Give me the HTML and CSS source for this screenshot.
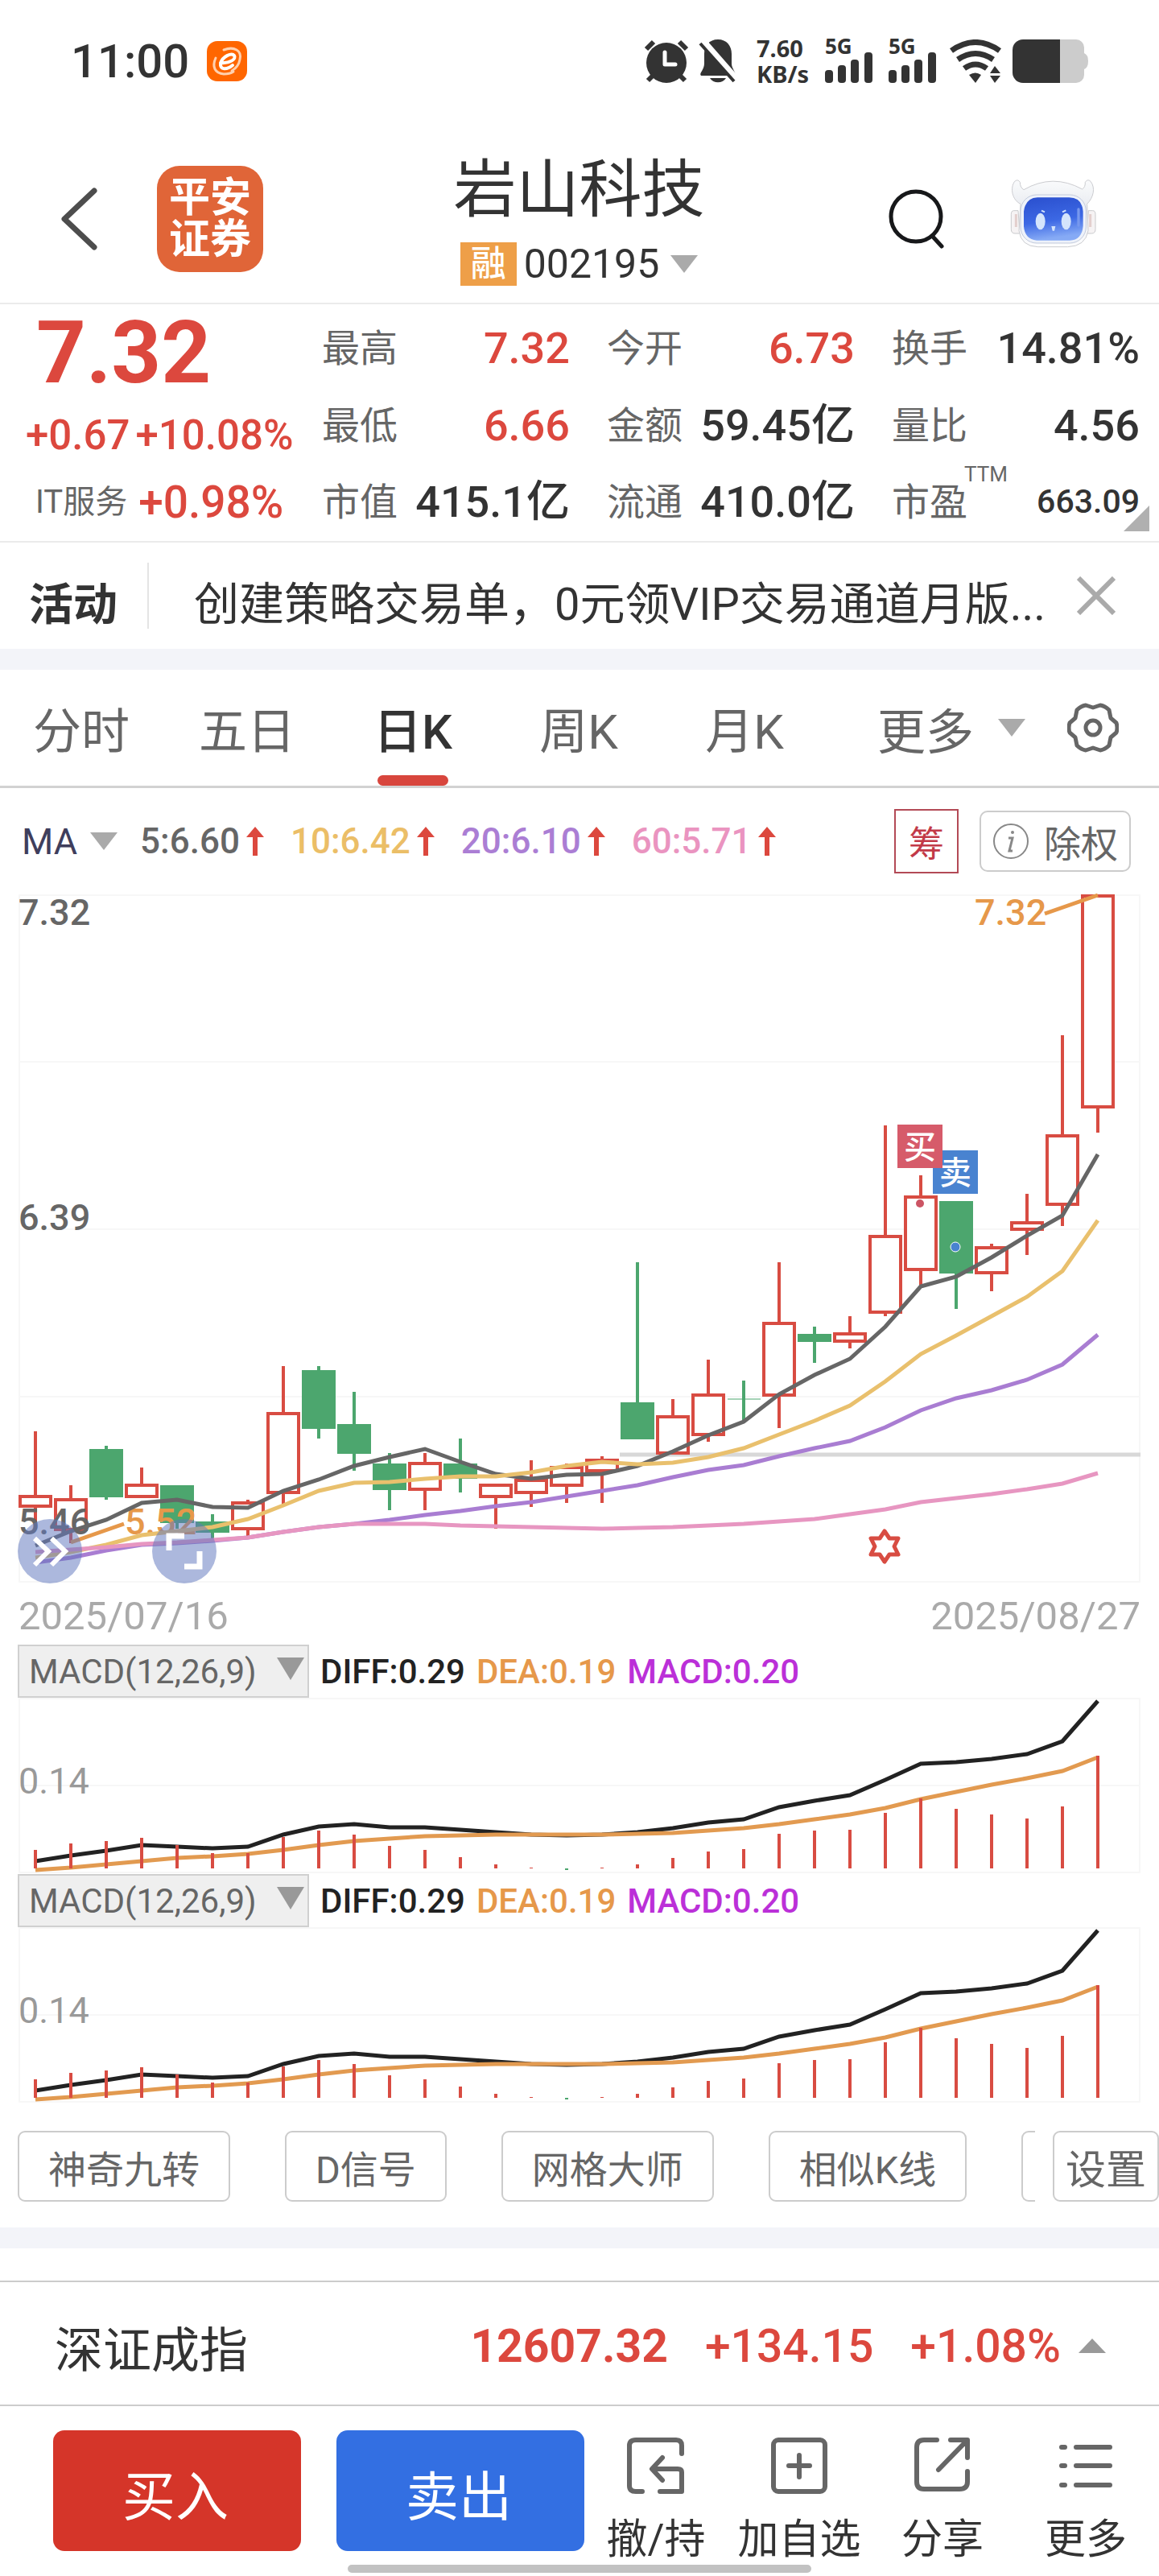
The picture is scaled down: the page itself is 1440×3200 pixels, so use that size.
FILE: index.html
```html
<!DOCTYPE html>
<html lang="zh-CN">
<head>
  <meta charset="UTF-8">
  <meta name="viewport" content="width=device-width, initial-scale=1.0">
  <title>岩山科技 002195</title>
  <link rel="stylesheet" href="styles.css">
</head>
<body>
  <div class="status-bar">
    <span class="clock">11:00</span>
    <svg class="status-app" width="50" height="50" viewBox="0 0 50 50">
      <rect width="50" height="50" rx="13" fill="#ff6600"/>
      <g fill="none" stroke-linecap="round">
        <path d="M17 27c12 1 20-5 17-9-3-4-15 1-17 10-1 8 8 8 15 2" stroke="#fff" stroke-width="4"/>
        <path d="M21 11c13-5 23 1 20 12-1 6-5 11-10 14" stroke="#ffd0ae" stroke-width="3"/>
        <path d="M11 21C6 32 10 40 21 41c5 0 9-1 12-3" stroke="#ffd0ae" stroke-width="3"/>
      </g>
    </svg>
    <div class="status-icons">
      <svg width="56" height="54" viewBox="0 0 56 54" fill="#333">
        <circle cx="28" cy="29" r="25"/>
        <path d="M3 12L12 3M53 12L44 3" stroke="#333" stroke-width="6"/>
        <path d="M5 51l8-8M51 51l-8-8" stroke="#333" stroke-width="6"/>
        <path d="M26 16v15h13" fill="none" stroke="#fff" stroke-width="5" stroke-linejoin="round" stroke-linecap="round"/>
      </svg>
      <svg class="bell" width="48" height="54" viewBox="0 0 48 54" fill="#333">
        <path d="M24 0C35 0 41 8 41 18v12c0 6 5 10 5 15H3c-3-3 4-7 4-15V18C7 8 13 0 24 0z"/>
        <path d="M14 48h20c-4 7-16 7-20 0z"/>
        <path d="M5 2l42 48" stroke="#fff" stroke-width="9"/>
        <path d="M2 5l42 47" stroke="#333" stroke-width="4"/>
      </svg>
      <div class="net-speed"><span>7.60</span><span>KB/s</span></div>
      <div class="signal">
        <span>5G</span>
        <svg width="60" height="38" viewBox="0 0 60 38" fill="#333">
          <rect y="22" width="10" height="16" rx="4"/><rect x="16" y="16" width="10" height="22" rx="4"/>
          <rect x="32" y="9" width="10" height="29" rx="4"/><rect x="49" width="10" height="38" rx="4"/>
        </svg>
      </div>
      <div class="signal">
        <span>5G</span>
        <svg width="60" height="38" viewBox="0 0 60 38" fill="#333">
          <rect y="22" width="10" height="16" rx="4"/><rect x="16" y="16" width="10" height="22" rx="4"/>
          <rect x="32" y="9" width="10" height="29" rx="4"/><rect x="49" width="10" height="38" rx="4"/>
        </svg>
      </div>
      <svg class="wifi" width="66" height="54" viewBox="0 0 66 54" fill="none" stroke="#333" stroke-width="7">
        <path d="M2 14Q32-7 62 14M10 25Q32 10 54 25M18 36Q32 26 46 36"/>
        <path d="M32 54l-8-10q8-5 15 0zM56 33l7 9H50zM56 54l7-9H50z" fill="#333" stroke="none"/>
      </svg>
      <svg width="94" height="54" viewBox="0 0 94 54">
        <path d="M59 0h20a10 10 0 0 1 10 10v7q5 2 5 10t-5 10v7a10 10 0 0 1-10 10H59z" fill="#ccc"/>
        <path d="M13 0h46v54H13A13 13 0 0 1 0 41V13A13 13 0 0 1 13 0z" fill="#333"/>
      </svg>
    </div>
  </div>

  <header class="header">
    <div class="header-left">
      <button class="icon-button" aria-label="返回">
        <svg width="48" height="78" viewBox="0 0 48 78" fill="none" stroke="#4d4d4d" stroke-width="7" stroke-linecap="round" stroke-linejoin="round">
          <path d="M42 4L5 39l37 35"/>
        </svg>
      </button>
      <div class="brand">平安<br>证券</div>
    </div>
    <div class="header-title">
      <h1>岩山科技</h1>
      <button class="code"><span class="badge">融</span>002195<i class="caret"></i></button>
    </div>
    <div class="header-right">
      <button class="icon-button" aria-label="搜索">
        <svg width="70" height="74" viewBox="0 0 70 74" fill="none" stroke="#17181a" stroke-width="5" stroke-linecap="round">
          <circle cx="34" cy="34" r="31"/><path d="M55 59l11 12"/>
        </svg>
      </button>
      <button class="icon-button robot" aria-label="智能助手">
        <svg width="110" height="90" viewBox="520 60 330 270">
          <defs>
            <linearGradient id="face" x1="0" y1="0" x2="0.2" y2="1">
              <stop offset="0" stop-color="#2a4fce"/><stop offset="0.6" stop-color="#3c68e4"/><stop offset="1" stop-color="#86aaf5"/>
            </linearGradient>
            <linearGradient id="shell" x1="0" y1="0" x2="0" y2="1">
              <stop offset="0" stop-color="#fafbfc"/><stop offset="0.4" stop-color="#e9ecf1"/><stop offset="1" stop-color="#fdfdfe"/>
            </linearGradient>
          </defs>
          <path d="M553 185h-16q-10 0-10 14v55q0 16 14 16h18zM815 185h16q10 0 10 14v55q0 16-14 16h-18z" fill="#f6f3f4" stroke="#c9cacd" stroke-width="3"/>
          <path d="M545 198v48M822 198v48" stroke="#e3cfcd" stroke-width="9"/>
          <path d="M562 160C530 145 522 100 540 76q12-10 20 3 0 20 14 28 108-62 218-2 12-8 11-26 9-14 20-3c19 24 11 60-13 84l4 100q-10 58-76 60H626q-62-2-70-60z" fill="url(#shell)" stroke="#cbccd0" stroke-width="3"/>
          <rect x="562" y="126" width="244" height="180" rx="60" fill="#eef2fa" stroke="#c3cbdc" stroke-width="3"/>
          <path d="M625 136h118q48 0 52 52v54q-4 52-50 54H622q-44-4-48-52v-56q6-50 51-52z" fill="url(#face)"/>
          <path d="M778 180v60" stroke="#7798ee" stroke-width="10" stroke-linecap="round"/>
          <ellipse cx="636" cy="225" rx="18" ry="31" fill="#d4e5fc"/><ellipse cx="732" cy="225" rx="18" ry="31" fill="#d4e5fc"/>
          <path d="M640 185l12 5M718 190l13-6" stroke="#d4e5fc" stroke-width="6"/>
          <path d="M677 243h15l-4 17h-7z" fill="#d4e5fc"/>
        </svg>
      </button>
    </div>
  </header>

  <section class="quote">
    <div class="quote-main">
      <div class="price">7.32</div>
      <div class="change"><span>+0.67</span><span>+10.08%</span></div>
      <div class="sector">IT服务<b>+0.98%</b></div>
    </div>
    <div class="quote-grid">
      <div class="cell">最高<b class="up">7.32</b></div>
      <div class="cell">今开<b class="up">6.73</b></div>
      <div class="cell">换手<b>14.81%</b></div>
      <div class="cell">最低<b class="up">6.66</b></div>
      <div class="cell">金额<b>59.45亿</b></div>
      <div class="cell">量比<b>4.56</b></div>
      <div class="cell">市值<b>415.1亿</b></div>
      <div class="cell">流通<b>410.0亿</b></div>
      <div class="cell">市盈<small>TTM</small><b class="pe">663.09</b></div>
    </div>
  </section>

  <section class="notice">
    <strong>活动</strong>
    <a href="#">创建策略交易单，0元领VIP交易通道月版...</a>
    <button class="icon-button" aria-label="关闭">
      <svg width="48" height="48" viewBox="0 0 48 48" stroke="#aaa" stroke-width="6"><path d="M2 2l44 44M46 2L2 46"/></svg>
    </button>
  </section>

  <nav class="tabs">
    <button>分时</button>
    <button>五日</button>
    <button class="active">日K</button>
    <button>周K</button>
    <button>月K</button>
    <div class="tabs-more">
      <button>更多<i class="caret"></i></button>
      <button aria-label="图表设置">
        <svg width="64" height="64" viewBox="0 0 64 64" fill="none" stroke="#666" stroke-width="5" stroke-linejoin="round">
          <path d="M61 26Q63 32 61 38L54 44 52 54Q47 59 41 60L32 57 23 60Q17 59 12 54L10 44 3 38Q1 32 3 26L10 20 12 10Q17 5 23 4L32 7 41 4Q47 5 52 10L54 20z"/>
          <circle cx="32" cy="32" r="9"/>
        </svg>
      </button>
    </div>
  </nav>

  <div class="ma-row">
    <button class="ma-select">MA<i class="caret"></i></button>
    <span class="ma ma5">5:6.60<svg class="arrow" width="22" height="36" viewBox="0 0 22 36"><path d="M11 0l11 13h-8v23H8V13H0z"/></svg></span>
    <span class="ma ma10">10:6.42<svg class="arrow" width="22" height="36" viewBox="0 0 22 36"><path d="M11 0l11 13h-8v23H8V13H0z"/></svg></span>
    <span class="ma ma20">20:6.10<svg class="arrow" width="22" height="36" viewBox="0 0 22 36"><path d="M11 0l11 13h-8v23H8V13H0z"/></svg></span>
    <span class="ma ma60">60:5.71<svg class="arrow" width="22" height="36" viewBox="0 0 22 36"><path d="M11 0l11 13h-8v23H8V13H0z"/></svg></span>
    <button class="chou">筹</button>
    <button class="chuquan">
      <svg width="46" height="46" viewBox="0 0 46 46" fill="none" stroke="#888">
        <circle cx="23" cy="23" r="21" stroke-width="2"/>
        <path d="M20 19h5l-4 16h4" stroke-width="3"/><circle cx="25" cy="12" r="2" fill="#888" stroke="none"/>
      </svg>除权
    </button>
  </div>

  <div class="kline">
    <svg id="kline" viewBox="23 1111 1394 854"></svg>
    <div class="kline-tools">
      <button aria-label="快进">
        <svg width="80" height="80" viewBox="0 0 80 80" fill="none" stroke="#fff" stroke-width="6"><path d="M21 24l17 16-17 17M42 24l17 16-17 17"/></svg>
      </button>
      <button aria-label="全屏">
        <svg width="80" height="80" viewBox="0 0 80 80" fill="none" stroke="#fff" stroke-width="7"><path d="M21 39V21h19M59 40v19H40"/></svg>
      </button>
    </div>
  </div>
  <div class="dates"><span>2025/07/16</span><span>2025/08/27</span></div>

  <section class="indicator">
    <div class="indicator-head">
      <button>MACD(12,26,9)<i class="caret"></i></button>
      <span class="diff">DIFF:0.29</span><span class="dea">DEA:0.19</span><span class="macd">MACD:0.20</span>
    </div>
    <svg class="macd-chart" viewBox="23 0 1394 218"></svg>
  </section>
  <section class="indicator">
    <div class="indicator-head">
      <button>MACD(12,26,9)<i class="caret"></i></button>
      <span class="diff">DIFF:0.29</span><span class="dea">DEA:0.19</span><span class="macd">MACD:0.20</span>
    </div>
    <svg class="macd-chart" viewBox="23 0 1394 218"></svg>
  </section>

  <div class="tools">
    <div class="tools-list">
      <button>神奇九转</button>
      <button>D信号</button>
      <button>网格大师</button>
      <button>相似K线</button>
      <button aria-label="其他"></button>
    </div>
    <button class="tools-setting">设置</button>
  </div>

  <div class="index-row">
    <span class="index-name">深证成指</span>
    <b>12607.32</b>
    <span>+134.15</span>
    <span>+1.08%</span>
    <i class="caret caret-up"></i>
  </div>

  <footer class="actions">
    <div class="trade">
      <button class="buy">买入</button>
      <button class="sell">卖出</button>
    </div>
    <div class="links">
      <a href="#">
        <svg width="72" height="70" viewBox="0 0 72 70"><path d="M68 20V10q0-7-7-7H11q-8 0-8 7v50q0 7 8 7h8M41 67h27V43q0-4-5-4H33M44 25L31 39l13 14"/></svg>
        撤/持
      </a>
      <a href="#">
        <svg width="72" height="70" viewBox="0 0 72 70"><rect x="4" y="3" width="64" height="64" rx="6"/><path d="M36 22v27M23 35h26"/></svg>
        加自选
      </a>
      <a href="#">
        <svg width="72" height="70" viewBox="0 0 72 70"><path d="M29 3H13Q4 3 4 12v43q0 9 9 9h44q10 0 10-9V42M46 3h21v22M66 4L31 40"/></svg>
        分享
      </a>
      <a href="#">
        <svg width="72" height="70" viewBox="0 0 72 70"><path d="M6 12h4M24 12h42M6 35h4M24 35h42M6 59h4M24 59h42"/></svg>
        更多
      </a>
    </div>
    <div class="home-bar"></div>
  </footer>

  <script src="chart.js"></script>
</body>
</html>
```

FILE: styles.css
```css
* {
  box-sizing: border-box;
}

body {
  margin: 0;
  background-color: #fff;
  color: #333;
  font-family: Roboto, "Noto Sans CJK SC", sans-serif;
}

button {
  margin: 0;
  padding: 0;
  border: none;
  background: none;
  color: inherit;
  font: inherit;
  white-space: nowrap;
}

a {
  color: inherit;
  text-decoration: none;
}

svg {
  display: block;
}

/* 下拉小三角 */
.caret {
  display: inline-block;
  flex: none;
  border-left: 17px solid transparent;
  border-right: 17px solid transparent;
  border-top: 22px solid #aaa;
}

.caret-up {
  border-top: none;
  border-bottom: 18px solid #999;
}

/* 状态栏 */
.status-bar {
  display: flex;
  align-items: center;
  height: 152px;
  padding: 0 88px;
}

.clock {
  font-size: 58px;
  font-weight: 500;
}

.status-app {
  margin-left: 22px;
}

.status-icons {
  display: flex;
  align-items: center;
  margin-left: auto;
  color: #333;
  font-family: "Noto Sans", sans-serif;
  font-weight: 700;
}

.bell {
  margin-left: 12px;
}

.net-speed {
  display: flex;
  flex-direction: column;
  width: 68px;
  margin-left: 24px;
  font-size: 29px;
  line-height: 32px;
}

.signal {
  display: flex;
  flex-direction: column;
  width: 62px;
  margin-left: 17px;
  font-size: 26px;
  line-height: 16px;
}

.wifi {
  margin: 0 12px 0 14px;
}

/* 头部 */
.header {
  display: grid;
  grid-template-columns: 1fr auto 1fr;
  align-items: center;
  height: 226px;
  padding: 16px 76px 0 75px;
  border-bottom: 2px solid #ebebeb;
}

.header-left {
  display: flex;
  align-items: center;
  gap: 72px;
}

.brand {
  padding: 14px 15px;
  border-radius: 28px;
  background-color: #e06538;
  color: #fff;
  font-size: 51px;
  font-weight: 700;
  line-height: 52px;
}

.header-title {
  text-align: center;
}

.header-title h1 {
  margin: 0;
  font-size: 78px;
  font-weight: 400;
  line-height: 96px;
}

.code {
  display: flex;
  align-items: center;
  justify-content: center;
  margin: 16px auto 0;
  font-size: 50px;
  line-height: 54px;
}

.badge {
  width: 70px;
  margin-right: 9px;
  background-color: #ee9f48;
  color: #fff;
  font-size: 44px;
  font-weight: 500;
}

.code .caret {
  margin-left: 14px;
}

.header-right {
  display: flex;
  align-items: center;
  justify-content: flex-end;
  gap: 80px;
}

.robot {
  padding-bottom: 14px;
}

/* 行情 */
.quote {
  position: relative;
  display: flex;
  height: 296px;
  border-bottom: 2px solid #ebebeb;
}

.quote::after {
  content: "";
  position: absolute;
  right: 12px;
  bottom: 12px;
  border-left: 32px solid transparent;
  border-bottom: 32px solid #b0b0b0;
}

.quote-main {
  flex: none;
  width: 400px;
  color: #dc483e;
}

.price {
  padding-left: 45px;
  font-size: 108px;
  font-weight: 700;
  line-height: 120px;
}

.change {
  display: flex;
  gap: 7px;
  padding-left: 32px;
  font-size: 51px;
  line-height: 86px;
}

.change,
.sector b,
.cell b {
  font-weight: 500;
}

.sector {
  display: flex;
  gap: 14px;
  padding-left: 44px;
  color: #666;
  font-size: 40px;
  line-height: 80px;
}

.sector b {
  color: #dc483e;
  font-size: 55px;
}

.quote-grid {
  display: grid;
  flex: 1;
  grid-template-columns: repeat(3, 1fr);
  column-gap: 46px;
  padding: 7px 24px 0 0;
}

.cell {
  display: flex;
  color: #666;
  font-size: 47px;
  line-height: 95px;
}

.cell b {
  margin-left: auto;
  color: #333;
  font-size: 54px;
}

.cell b.up {
  color: #dc483e;
}

.cell small {
  margin-left: -4px;
  font-size: 26px;
  line-height: 26px;
}

.cell b.pe {
  font-size: 41px;
}

/* 活动 */
.notice {
  display: flex;
  align-items: center;
  height: 158px;
  padding: 0 54px 0 36px;
  border-bottom: 26px solid #f3f4f9;
}

.notice strong {
  flex: none;
  padding-top: 22px;
  font-size: 55px;
  line-height: 60px;
}

.notice a {
  flex: 1;
  margin-left: 37px;
  padding: 22px 0 0 56px;
  border-left: 2px solid #e4e4e4;
  font-size: 56px;
  line-height: 60px;
  white-space: nowrap;
}

/* 周期切换 */
.tabs {
  display: grid;
  grid-template-columns: repeat(5, 1fr) 410px;
  height: 147px;
  border-bottom: 3px solid #d2d2d2;
  color: #666;
  font-size: 60px;
}

.tabs > button {
  padding: 0 4px 2px 0;
}

.tabs .active {
  position: relative;
  color: #333;
  font-weight: 500;
}

.tabs .active::after {
  content: "";
  position: absolute;
  bottom: 0;
  left: 50%;
  width: 88px;
  height: 13px;
  margin-left: -46px;
  border-radius: 7px;
  background-color: #d8463d;
}

.tabs-more {
  display: flex;
  align-items: center;
  justify-content: space-between;
  padding: 0 50px 0 60px;
}

.tabs-more button {
  display: flex;
  align-items: center;
  gap: 30px;
}

/* 均线 */
.ma-row {
  display: flex;
  align-items: center;
  height: 132px;
  padding: 0 35px 0 27px;
  font-size: 45px;
}

.ma-select {
  display: flex;
  align-items: center;
  gap: 16px;
  color: #3f3e5c;
}

.ma {
  display: flex;
  align-items: center;
  gap: 8px;
  margin-left: 33px;
  font-size: 44px;
  font-weight: 500;
}

.ma5 {
  margin-left: 28px;
  color: #666;
}

.ma10 {
  color: #ebbe67;
}

.ma20 {
  color: #ab7ed4;
}

.ma60 {
  color: #ea94c0;
}

.arrow {
  fill: #dc483e;
}

.chou {
  width: 80px;
  height: 80px;
  margin-left: auto;
  border: 2px solid #b34a56;
  color: #c23a48;
  font-size: 44px;
}

.chuquan {
  display: flex;
  align-items: center;
  gap: 18px;
  height: 76px;
  margin-left: 26px;
  padding: 0 14px;
  border: 2px solid #ccc;
  border-radius: 10px;
  color: #666;
  font-size: 46px;
}

/* K线图 */
.kline {
  position: relative;
  margin: 0 23px;
}

#kline,
.macd-chart {
  width: 100%;
  overflow: visible;
  font-size: 45px;
  font-weight: 500;
}

.kline-tools {
  position: absolute;
  bottom: -2px;
  left: -1px;
  display: flex;
  gap: 87px;
}

.kline-tools button {
  border-radius: 50%;
  background-color: rgba(95, 118, 189, 0.52);
}

.grid {
  fill: none;
  stroke: #f7f7f7;
  stroke-width: 2;
}

.red {
  fill: #fff;
  stroke: #d84c42;
  stroke-width: 4;
}

.green {
  fill: #4ca66e;
  stroke: #4ca66e;
  stroke-width: 4;
}

.line {
  fill: none;
  stroke-width: 5;
}

.axis {
  fill: #666;
}

.mark {
  fill: #e6984a;
}

.tag {
  fill: #fff;
  font-size: 40px;
}

.dates {
  display: flex;
  justify-content: space-between;
  padding: 8px 23px 0;
  color: #aaa;
  font-size: 49px;
  line-height: 70px;
}

/* 指标 */
.indicator {
  margin: 0 23px 1px;
}

.indicator-head {
  display: flex;
  align-items: center;
  gap: 14px;
  height: 66px;
  font-size: 42px;
  font-weight: 500;
}

.indicator-head button {
  display: flex;
  align-items: center;
  justify-content: space-between;
  width: 362px;
  height: 66px;
  margin-left: -1px;
  padding: 0 4px 0 12px;
  border: 2px solid #d0d0d0;
  background-color: #efefef;
  color: #666;
  font-weight: 400;
}

.indicator-head .caret {
  margin-bottom: 6px;
  border-top: 28px solid #999;
}

.diff {
  color: #222;
}

.dea {
  color: #e6984a;
}

.macd {
  color: #bb30d8;
}

.macd-chart .axis {
  fill: #999;
  font-weight: 400;
}

/* 工具按钮 */
.tools {
  display: flex;
  justify-content: space-between;
  padding: 34px 0 32px 22px;
  border-bottom: 26px solid #f3f4f9;
  color: #666;
  font-size: 47px;
}

.tools button {
  flex: none;
  height: 88px;
  padding: 0 36px;
  border: 2px solid #ccc;
  border-radius: 9px;
}

.tools-list {
  display: flex;
  flex: 1;
  gap: 68px;
  overflow: hidden;
}

.tools .tools-setting {
  margin-left: 22px;
  padding: 0 14px;
  font-size: 50px;
}

/* 指数 */
.index-row {
  display: flex;
  align-items: center;
  gap: 46px;
  height: 156px;
  margin-top: 40px;
  padding: 6px 66px 0 68px;
  border-top: 2px solid #ccc;
  border-bottom: 2px solid #ccc;
  color: #dc483e;
  font-size: 57px;
  font-weight: 500;
}

.index-name {
  margin-right: auto;
  color: #333;
  font-size: 60px;
  font-weight: 400;
}

.index-row .caret {
  margin-left: -24px;
}

/* 底部操作 */
.actions {
  position: relative;
  display: flex;
  height: 211px;
  padding-top: 30px;
}

.trade {
  display: flex;
  flex: 1;
  gap: 44px;
  padding-left: 66px;
}

.trade button {
  flex: 1;
  height: 150px;
  padding: 4px 4px 0 0;
  border-radius: 14px;
  color: #fff;
  font-size: 66px;
}

.buy {
  background-color: #d53529;
}

.sell {
  background-color: #336fe2;
}

.links {
  display: grid;
  flex: none;
  grid-template-columns: repeat(4, 178px);
  padding-right: 2px;
  font-size: 51px;
  line-height: 60px;
  text-align: center;
  white-space: nowrap;
}

.links svg {
  margin: 9px auto 27px;
  fill: none;
  stroke: #666;
  stroke-width: 6;
  stroke-linecap: round;
  stroke-linejoin: round;
}

.home-bar {
  position: absolute;
  bottom: 4px;
  left: 30%;
  width: 40%;
  height: 10px;
  border-radius: 5px;
  background-color: #c2c2c2;
}
```

FILE: chart.js
```js
// 每根K线: [颜色, 最高, 实体上沿, 实体下沿, 最低]
var candles = [
  ["red", 1778, 1857, 1873, 1900],
  ["red", 1845, 1861, 1902, 1917],
  ["green", 1796, 1800, 1860, 1863],
  ["red", 1823, 1843, 1861, 1861],
  ["green", 1845, 1845, 1892, 1899],
  ["green", 1881, 1890, 1904, 1911],
  ["red", 1863, 1865, 1901, 1908],
  ["red", 1697, 1754, 1856, 1869],
  ["green", 1697, 1702, 1775, 1787],
  ["green", 1729, 1769, 1806, 1827],
  ["green", 1805, 1818, 1851, 1876],
  ["red", 1805, 1816, 1852, 1876],
  ["green", 1787, 1818, 1837, 1854],
  ["red", 1843, 1843, 1861, 1899],
  ["red", 1814, 1837, 1856, 1872],
  ["red", 1818, 1821, 1847, 1867],
  ["red", 1809, 1812, 1829, 1867],
  ["green", 1568, 1742, 1788, 1788],
  ["red", 1738, 1758, 1807, 1807],
  ["red", 1689, 1731, 1784, 1791],
  ["green", 1715, 1738, 1739, 1765],
  ["red", 1568, 1642, 1735, 1774],
  ["green", 1648, 1657, 1667, 1693],
  ["red", 1635, 1655, 1668, 1675],
  ["red", 1398, 1534, 1632, 1635],
  ["red", 1460, 1485, 1579, 1598],
  ["green", 1492, 1492, 1582, 1626],
  ["red", 1545, 1548, 1583, 1604],
  ["red", 1483, 1517, 1529, 1559],
  ["red", 1286, 1409, 1498, 1523],
  ["red", 1111, 1111, 1377, 1407]
];

var averages = [
  { color: "#666", data: [1920, 1902, 1888, 1867, 1863, 1872, 1873, 1852, 1838, 1821, 1810, 1800, 1816, 1831, 1837, 1832, 1831, 1821, 1803, 1783, 1766, 1732, 1708, 1688, 1648, 1598, 1586, 1562, 1535, 1510, 1434] },
  { color: "#e9c06d", data: [1935, 1928, 1919, 1907, 1902, 1897, 1887, 1870, 1852, 1842, 1841, 1837, 1834, 1834, 1829, 1821, 1816, 1819, 1817, 1810, 1799, 1782, 1765, 1746, 1716, 1682, 1659, 1635, 1611, 1579, 1516] },
  { color: "#a97dd2", data: [1941, 1935, 1926, 1919, 1917, 1914, 1910, 1903, 1897, 1893, 1888, 1882, 1877, 1871, 1866, 1859, 1852, 1845, 1835, 1826, 1820, 1809, 1799, 1790, 1773, 1752, 1737, 1727, 1714, 1695, 1658] },
  { color: "#e796c1", data: [1928, 1925, 1922, 1918, 1916, 1913, 1910, 1903, 1897, 1893, 1893, 1893, 1895, 1896, 1897, 1898, 1899, 1898, 1897, 1895, 1893, 1890, 1887, 1881, 1875, 1866, 1861, 1856, 1850, 1843, 1830] }
];

var diff = [203, 196, 190, 183, 185, 187, 185, 170, 160, 157, 161, 161, 164, 167, 170, 171, 170, 167, 162, 155, 151, 136, 128, 121, 102, 82, 80, 76, 70, 54, 4];
var dea = [214, 211, 207, 203, 199, 197, 194, 189, 183, 178, 175, 172, 171, 170, 170, 170, 170, 169, 168, 165, 162, 157, 151, 145, 137, 126, 117, 108, 100, 91, 74];
var bars = [23, 31, 34, 38, 29, 19, 19, 39, 47, 42, 28, 23, 14, 5, 1, -2, 1, 5, 13, 21, 24, 43, 47, 48, 69, 87, 74, 67, 62, 77, 140];

function px(i) {
  return 44 + i * 44;
}

function polyline(data, color) {
  var points = data.map(function(y, i) {
    return px(i) + "," + y;
  });
  return '<polyline class="line" stroke="' + color + '" points="' + points.join(" ") + '"/>';
}

function drawKline() {
  var svg = '<path class="grid" d="M24 1112H1416V1965H24zM24 1319H1416M24 1527H1416M24 1735H1416"/>';
  svg += '<path class="line" stroke="#d8d8d8" d="M770 1807H1417"/>';
  svg += '<text class="axis" x="23" y="1149">7.32</text>';
  svg += '<text class="axis" x="23" y="1528">6.39</text>';

  candles.forEach(function(c, i) {
    var x = px(i);
    svg += '<path class="' + c[0] + '" d="M' + x + " " + c[1] + "V" + c[2] + "M" + x + " " + c[3] + "V" + c[4] + '"/>';
    if (c[3] - c[2] < 2) {
      // 十字星
      svg += '<path class="green" d="M' + x + " " + c[1] + "V" + c[4] + '"/>';
      svg += '<path stroke="#4ca66e" d="M' + (x - 20) + " " + c[2] + "H" + (x + 21) + '"/>';
    } else {
      svg += '<rect class="' + c[0] + '" x="' + (x - 19) + '" y="' + (c[2] + 2) + '" width="38" height="' + (c[3] - c[2] - 4) + '"/>';
    }
  });

  svg += '<text class="axis" x="23" y="1906">5.46</text>';
  svg += '<text class="mark" x="155" y="1906">5.52</text>';
  svg += '<text class="mark" x="1211" y="1149">7.32</text>';
  svg += '<path class="line" stroke="#e6984a" d="M88 1916L154 1893M1298 1135L1364 1112"/>';

  averages.forEach(function(ma) {
    svg += polyline(ma.data, ma.color);
  });

  // 买卖标记
  svg += '<rect x="1159" y="1429" width="56" height="54" fill="#4983d0"/><text class="tag" x="1167" y="1471">卖</text>';
  svg += '<rect x="1115" y="1397" width="56" height="54" fill="#d65b6a"/><text class="tag" x="1123" y="1439">买</text>';
  svg += '<circle cx="1143" cy="1495" r="5" fill="#cc5564"/>';
  svg += '<circle cx="1187" cy="1549" r="6" fill="#4983d0" stroke="#fff"/>';
  svg += '<path transform="translate(1099 1921)" fill="none" stroke="#d84c42" stroke-width="5" stroke-linejoin="round" d="M0-19L6-10H17L12 0 17 10H6L0 19-6 10H-17L-12 0-17-10H-6z"/>';

  document.getElementById("kline").innerHTML = svg;
}

function drawMacd(el) {
  var svg = '<path class="grid" d="M24 1H1416V217H24zM24 109H1416"/>';
  svg += '<text class="axis" x="23" y="119">0.14</text>';
  svg += polyline(diff, "#222") + polyline(dea, "#e29a50");
  bars.forEach(function(h, i) {
    svg += '<path stroke-width="4" stroke="' + (h > 0 ? "#d84c42" : "#4ca66e") + '" d="M' + px(i) + " 212v" + -h + '"/>';
  });
  el.innerHTML = svg;
}

drawKline();
document.querySelectorAll(".macd-chart").forEach(drawMacd);
```
